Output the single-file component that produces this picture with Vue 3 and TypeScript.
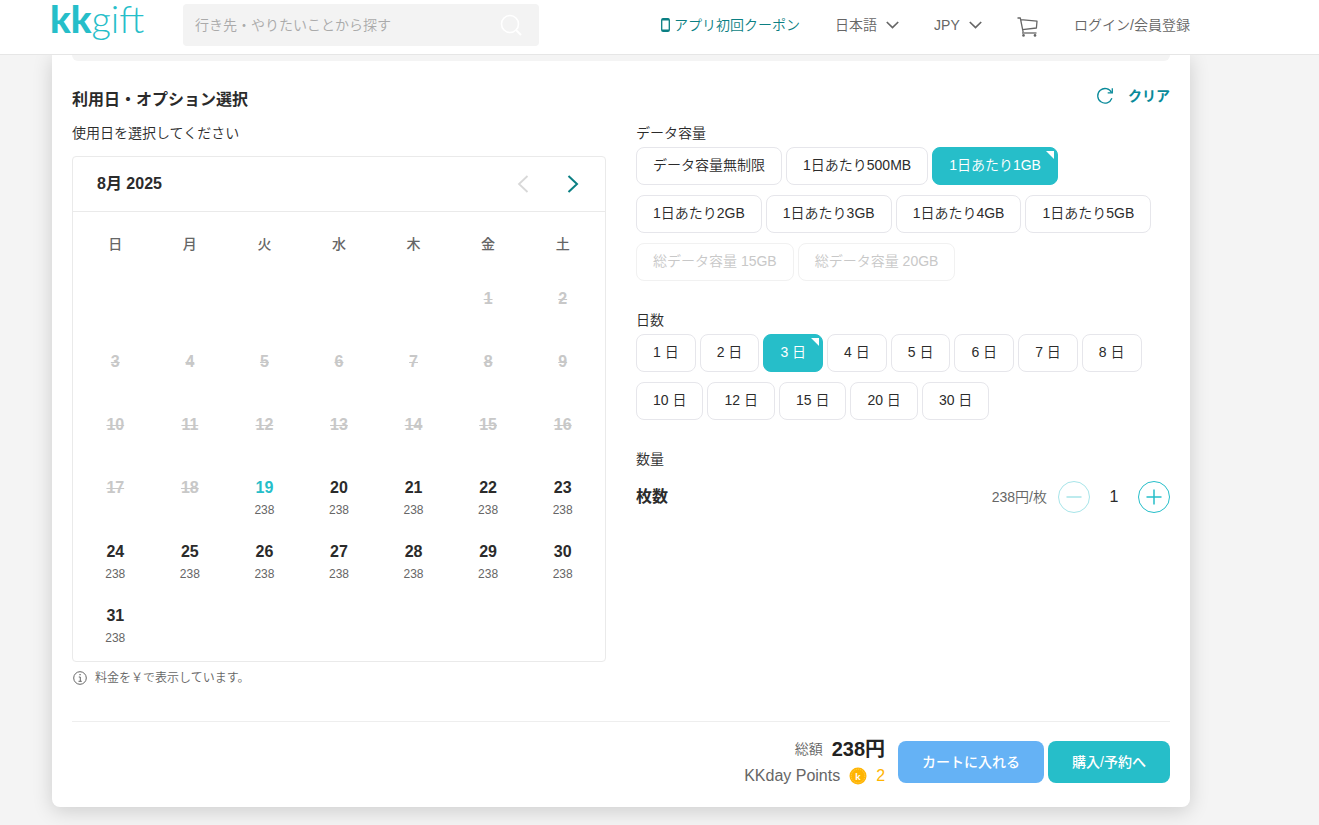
<script setup lang="ts">
import { computed, ref } from 'vue'

interface Option {
  label: string
  disabled?: boolean
}

interface Day {
  date: number | null
  open: boolean
}

const dataOptions: Option[] = [
  { label: 'データ容量無制限' },
  { label: '1日あたり500MB' },
  { label: '1日あたり1GB' },
  { label: '1日あたり2GB' },
  { label: '1日あたり3GB' },
  { label: '1日あたり4GB' },
  { label: '1日あたり5GB' },
  { label: '総データ容量 15GB', disabled: true },
  { label: '総データ容量 20GB', disabled: true },
]
const dayOptions: Option[] = [1, 2, 3, 4, 5, 6, 7, 8, 10, 12, 15, 20, 30].map((n) => ({ label: `${n} 日` }))

const selectedData = ref('1日あたり1GB')
const selectedDays = ref('3 日')
const quantity = ref(1)
const unitPrice = 238
const total = computed(() => unitPrice * quantity.value)

const weekdays = ['日', '月', '火', '水', '木', '金', '土']
const today = 19
const firstColumn = 5
const weeks: Day[][] = Array.from({ length: 6 }, (_, w) =>
  Array.from({ length: 7 }, (_, d) => {
    const n = w * 7 + d - firstColumn + 1
    return { date: n >= 1 && n <= 31 ? n : null, open: n >= today }
  }),
)

function clearAll() {
  selectedData.value = ''
  selectedDays.value = ''
  quantity.value = 1
}
</script>

<template>
  <div class="page">
    <header class="header">
      <a class="logo" href="#" aria-label="kkgift"><span class="logo-bold">kk</span><span class="logo-thin">gift</span></a>
      <form class="search" role="search" @submit.prevent>
        <input type="text" aria-label="検索" placeholder="行き先・やりたいことから探す" />
        <button type="submit" aria-label="検索">
          <svg width="22" height="22" viewBox="0 0 22 22" fill="none" stroke="#fff" stroke-width="1.6">
            <circle cx="10" cy="10" r="8.5" />
            <path d="M16 16l5 5" stroke-width="2" />
          </svg>
        </button>
      </form>
      <nav class="nav">
        <a class="coupon" href="#">
          <svg width="9" height="14" viewBox="0 0 9 14">
            <rect x="0.7" y="0.7" width="7.6" height="12.6" rx="1.4" fill="none" stroke="#0b7f83" stroke-width="1.3" />
            <path d="M1 1.6h7M1 12.2h7" stroke="#0b7f83" stroke-width="1.6" />
          </svg>
          <span>アプリ初回クーポン</span>
        </a>
        <label class="picker lang">
          <select aria-label="言語"><option>日本語</option></select>
          <svg width="13" height="8" viewBox="0 0 13 8" fill="none" stroke="#666" stroke-width="1.7"><path d="M.8 1l5.7 5.6L12.2 1" /></svg>
        </label>
        <label class="picker currency">
          <select aria-label="通貨"><option>JPY</option></select>
          <svg width="13" height="8" viewBox="0 0 13 8" fill="none" stroke="#666" stroke-width="1.7"><path d="M.8 1l5.7 5.6L12.2 1" /></svg>
        </label>
        <a class="cart" href="#" aria-label="カート">
          <svg width="22" height="20" viewBox="0 0 22 20" fill="none" stroke="#666" stroke-width="1.3">
            <path d="M.5 1h2.800l2.900 14.300M3.700 2.700l16.300 1.500-.6 6.800-13.900 1.700" stroke-linejoin="round" />
            <path d="M5 16h14.500" />
            <circle cx="6.500" cy="18.400" r="1.300" fill="#666" stroke="none" />
            <circle cx="18" cy="18.400" r="1.300" fill="#666" stroke="none" />
          </svg>
        </a>
        <a class="login" href="#">ログイン/会員登録</a>
      </nav>
    </header>

    <main class="card">
      <div class="strip"></div>
      <div class="heading">
        <h2>利用日・オプション選択</h2>
        <button class="clear" type="button" @click="clearAll">
          <svg width="18" height="18" viewBox="0 0 18 18" fill="none" stroke="#098a9a" stroke-width="1.3">
            <path d="M15.900 11.300A7.300 7.300 0 1 1 15.600 5.600" />
            <path d="M16.300 1.300v4.600h-4.600" />
          </svg>
          <span>クリア</span>
        </button>
      </div>

      <div class="columns">
        <section>
          <p class="label">使用日を選択してください</p>
          <div class="calendar">
            <div class="cal-head">
              <h3>8月 2025</h3>
              <button type="button" aria-label="前の月" disabled>
                <svg width="12" height="18" viewBox="0 0 12 18" fill="none" stroke="#d8d8d8" stroke-width="1.8"><path d="M10.500 1L2 9l8.500 8" /></svg>
              </button>
              <button type="button" aria-label="次の月">
                <svg width="12" height="18" viewBox="0 0 12 18" fill="none" stroke="#0b7f83" stroke-width="2"><path d="M1.500 1L10 9l-8.500 8" /></svg>
              </button>
            </div>
            <table>
              <thead>
                <tr><th v-for="w in weekdays" :key="w" scope="col">{{ w }}</th></tr>
              </thead>
              <tbody>
                <tr v-for="(week, i) in weeks" :key="i">
                  <td v-for="(day, j) in week" :key="j">
                    <button v-if="day.date" type="button" class="day" :class="{ today: day.date === today }" :disabled="!day.open">
                      <span class="num">{{ day.date }}</span>
                      <span v-if="day.open" class="price">{{ unitPrice }}</span>
                    </button>
                  </td>
                </tr>
              </tbody>
            </table>
          </div>
          <p class="note">
            <svg width="14" height="14" viewBox="0 0 14 14" fill="none" stroke="#666">
              <circle cx="7" cy="7" r="6.300" />
              <path d="M5.800 6h1.500v4.300M5.500 10.300h3.300" />
              <path d="M6.400 3.700h1.300" stroke-width="1.300" />
            </svg>
            <span>料金を￥で表示しています。</span>
          </p>
        </section>

        <section>
          <p class="label">データ容量</p>
          <div class="chips">
            <button
              v-for="o in dataOptions"
              :key="o.label"
              type="button"
              class="chip"
              :class="{ on: o.label === selectedData }"
              :aria-pressed="o.label === selectedData"
              :disabled="o.disabled"
              @click="selectedData = o.label"
            >{{ o.label }}</button>
          </div>
          <p class="label next">日数</p>
          <div class="chips">
            <button
              v-for="o in dayOptions"
              :key="o.label"
              type="button"
              class="chip"
              :class="{ on: o.label === selectedDays }"
              :aria-pressed="o.label === selectedDays"
              @click="selectedDays = o.label"
            >{{ o.label }}</button>
          </div>
          <p class="label next">数量</p>
          <div class="quantity">
            <label for="qty">枚数</label>
            <span class="unit">{{ unitPrice }}円/枚</span>
            <button type="button" aria-label="減らす" :disabled="quantity <= 1" @click="quantity--">
              <svg width="32" height="32" viewBox="0 0 32 32" fill="none" stroke="#26bec9">
                <circle cx="16" cy="16" r="15.500" />
                <path d="M8.500 16h15" stroke-width="1.500" />
              </svg>
            </button>
            <input id="qty" v-model.number="quantity" type="text" inputmode="numeric" />
            <button type="button" aria-label="増やす" @click="quantity++">
              <svg width="32" height="32" viewBox="0 0 32 32" fill="none" stroke="#26bec9">
                <circle cx="16" cy="16" r="15.500" />
                <path d="M8.500 16h15M16 8.500v15" stroke-width="1.500" />
              </svg>
            </button>
          </div>
        </section>
      </div>

      <footer class="summary">
        <div class="totals">
          <div class="total"><span>総額</span><strong>{{ total }}円</strong></div>
          <div class="points">
            <span>KKday Points</span>
            <svg width="18" height="18" viewBox="0 0 18 18">
              <circle cx="9" cy="9" r="8.500" fill="#ffb400" />
              <circle cx="9" cy="9" r="6.800" fill="none" stroke="#ffd772" stroke-width=".8" stroke-dasharray="1 1" />
              <text x="9" y="12.500" text-anchor="middle" class="coin">k</text>
            </svg>
            <b>2</b>
          </div>
        </div>
        <div class="actions">
          <button type="button" class="action add">カートに入れる</button>
          <button type="button" class="action buy">購入/予約へ</button>
        </div>
      </footer>
    </main>
  </div>
</template>

<style>
body {
  background: #f4f4f4;
}
</style>

<style scoped>
.page {
  min-height: 100vh;
  box-sizing: border-box;
  display: flow-root;
  font-family: "Liberation Sans", "Noto Sans CJK JP", sans-serif;
  font-size: 14px;
  font-weight: 350;
  line-height: 20px;
  color: #2b2b2b;
}
.page *,
.page *::before,
.page *::after {
  box-sizing: border-box;
}
button,
input,
select {
  font: inherit;
  color: inherit;
  margin: 0;
  padding: 0;
  border: 0;
  background: none;
}
button {
  cursor: pointer;
}
svg {
  display: block;
  flex: none;
}
a {
  color: inherit;
  text-decoration: none;
}
h2,
h3,
p {
  margin: 0;
}

.header {
  position: relative;
  z-index: 1;
  display: flex;
  align-items: center;
  height: 55px;
  padding: 0 129px 5px 50px;
  background: #fff;
  border-bottom: 1px solid #e6e6e6;
  color: #666;
}
.logo {
  align-self: flex-start;
  width: 133px;
  font-family: Lato, sans-serif;
  font-size: 38px;
  line-height: 36px;
  color: #26bec9;
  white-space: nowrap;
}
.logo-bold {
  font-weight: 900;
}
.logo-thin {
  font-weight: 300;
}
.search {
  display: flex;
  align-items: center;
  width: 356px;
  height: 42px;
  padding: 0 17px 0 12px;
  border-radius: 4px;
  background: #f3f3f3;
}
.search input {
  flex: 1;
  min-width: 0;
  outline: 0;
}
.search input::placeholder {
  color: #aaa;
  opacity: 1;
}
.nav {
  display: flex;
  align-items: center;
  margin-left: auto;
}
.coupon {
  display: flex;
  align-items: center;
  gap: 4px;
  margin-right: 35px;
  color: #0b7f83;
}
.picker {
  display: grid;
  align-items: center;
}
.picker select,
.picker svg {
  grid-area: 1 / 1;
}
.picker select {
  appearance: none;
  width: 100%;
}
.picker svg {
  justify-self: end;
  pointer-events: none;
}
.lang {
  width: 64px;
  margin-right: 35px;
}
.currency {
  width: 48px;
  margin-right: 35px;
}
.cart {
  margin-right: 35px;
  padding-top: 4px;
}

.card {
  margin: 0 129px 0 52px;
  padding: 0 20px 17px;
  background: #fff;
  border-radius: 0 0 8px 8px;
  box-shadow: 0 4px 20px rgba(0, 0, 0, 0.16);
}
.strip {
  height: 6px;
  border-radius: 0 0 6px 6px;
  background: #f4f4f4;
}
.heading {
  display: flex;
  align-items: flex-start;
  justify-content: space-between;
  padding: 25px 0 11px;
}
.heading h2 {
  font-size: 16px;
  line-height: 24px;
  padding-top: 2px;
}
.clear {
  display: flex;
  align-items: center;
  gap: 14px;
  font-weight: 700;
  color: #098a9a;
}
.columns {
  display: grid;
  grid-template-columns: minmax(0, 1fr) minmax(0, 1fr);
  gap: 30px;
}
.label {
  margin-bottom: 4px;
}
.next {
  margin-top: 29px;
}

.calendar {
  margin-top: 13px;
  padding-bottom: 2px;
  border: 1px solid #eaeaea;
  border-radius: 4px;
}
.cal-head {
  display: flex;
  align-items: center;
  gap: 38px;
  height: 55px;
  padding: 0 26px 0 24px;
  border-bottom: 1px solid #eaeaea;
}
.cal-head h3 {
  flex: 1;
  font-size: 16px;
  line-height: 24px;
}
table {
  width: calc(100% - 10px);
  margin: 0 5px;
  border-collapse: collapse;
  table-layout: fixed;
}
th {
  height: 66px;
  padding: 0 0 2px;
  font-weight: 500;
  color: #666;
}
td {
  height: 63px;
  padding: 9px 0 0;
  vertical-align: top;
}
.day {
  display: flex;
  flex-direction: column;
  width: 100%;
  padding-bottom: 11px;
  align-items: center;
}
.num {
  font-size: 16px;
  font-weight: 700;
  line-height: 24px;
}
.price {
  font-size: 12px;
  line-height: 20px;
  color: #666;
}
.day:disabled {
  color: #c8c8c8;
}
.day:disabled .num {
  text-decoration: line-through;
}
.today {
  color: #26bec9;
}
.note {
  display: flex;
  align-items: center;
  gap: 8px;
  margin: 6px 0 0 1px;
  font-size: 12px;
  color: #666;
}

.chips {
  display: flex;
  flex-wrap: wrap;
  gap: 10px 4px;
}
.chip {
  position: relative;
  height: 38px;
  padding: 0 16px 2px;
  border: 1px solid #e6e6eb;
  border-radius: 8px;
  background: #fff;
  white-space: pre;
}
.chip:disabled {
  border-color: #f1f1f1;
  color: #c8c8c8;
}
.chip.on {
  border-color: #26bec9;
  background: #26bec9;
  color: #fff;
}
.chip.on::after {
  content: "";
  position: absolute;
  top: 3px;
  right: 3px;
  width: 8px;
  height: 8px;
  background: #fff;
  clip-path: polygon(0 0, 100% 0, 100% 100%);
}
.quantity {
  display: flex;
  align-items: center;
  margin-top: 12px;
}
.quantity label {
  flex: 1;
  font-size: 16px;
  font-weight: 700;
}
.quantity input {
  width: 48px;
  font-size: 16px;
  text-align: center;
}
.quantity button:disabled {
  opacity: 0.4;
}
.unit {
  margin-right: 11px;
  color: #666;
}

.summary {
  display: flex;
  justify-content: flex-end;
  gap: 13px;
  margin-top: 33px;
  padding-top: 14px;
  border-top: 1px solid #eee;
}
.totals {
  display: flex;
  flex-direction: column;
  align-items: flex-end;
  color: #666;
}
.total {
  display: flex;
  align-items: center;
  gap: 9px;
}
.total strong {
  font-size: 20px;
  font-weight: 700;
  line-height: 26px;
  color: #222;
}
.points {
  display: flex;
  align-items: center;
  gap: 9px;
  font-size: 16px;
  line-height: 28px;
}
.points b {
  font-weight: 400;
  color: #ffb400;
}
.coin {
  font-family: Lato, sans-serif;
  font-size: 10px;
  font-weight: 700;
  fill: #fff;
}
.actions {
  display: flex;
  gap: 4px;
  padding-top: 5px;
}
.action {
  height: 42px;
  padding: 0 24px;
  border-radius: 8px;
  font-weight: 500;
  color: #fff;
}
.add {
  background: #65b2f5;
}
.buy {
  background: #26bec9;
}
</style>
